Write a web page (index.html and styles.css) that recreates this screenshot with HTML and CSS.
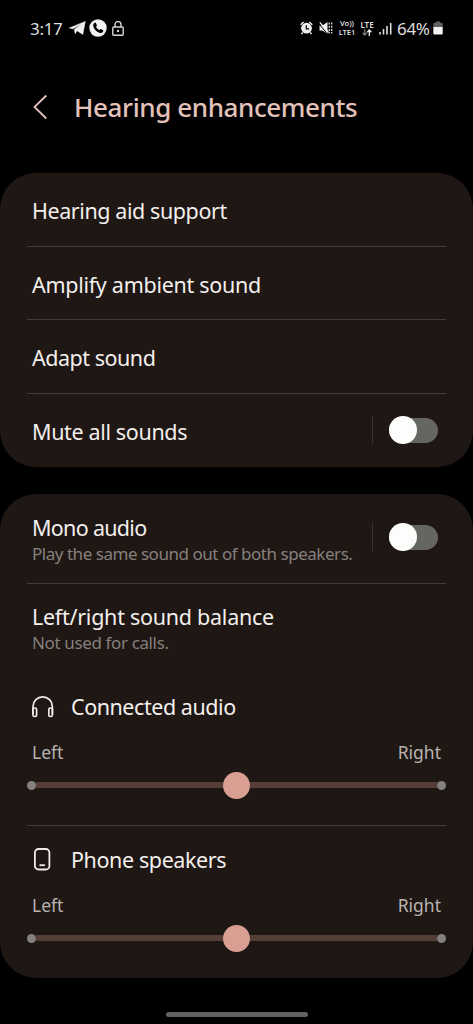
FILE: index.html
```html
<!DOCTYPE html>
<html lang="en">
<head>
<meta charset="utf-8">
<title>Hearing enhancements</title>
<link rel="stylesheet" href="styles.css">
</head>
<body>
<div class="screen">
  <div class="status">
    <span class="clock">3:17</span>
    <svg class="ic-plane" width="17" height="14" viewBox="0 0 17 14"><path d="M16.3.4 13.8 13.4 8 9.7 6.2 12.8 5.300 8.500 13 2.700 4 7.800.3 7z" fill="#f2f2f2" stroke="#f2f2f2" stroke-width=".5"/></svg>
    <svg class="ic-phone" width="18" height="18" viewBox="0 0 18 18"><circle cx="9" cy="9" r="8.700" fill="#f2f2f2"/><path d="M5.200 3.900 6.800 3.700 8 6.400 7 7.700Q8 10 10.400 11.100L11.600 10 14.300 11.300 13.900 13Q12.500 14.500 10.300 13.700 5.800 12 4.300 7.500 3.700 5.200 5.200 3.900z" fill="#000"/></svg>
    <svg class="ic-lock" width="12" height="15" viewBox="0 0 12 15" fill="none" stroke="#d8d8d8" stroke-width="1.400"><rect x=".8" y="6" width="10.400" height="8.200" rx="1"/><path d="M3 6V3.600a3 3 0 0 1 6 0V6"/><circle cx="6" cy="10" r="1.200" fill="#d8d8d8" stroke="none"/></svg>
    <span class="spacer"></span>
    <svg class="ic-alarm" width="13" height="14" viewBox="0 0 13 14"><circle cx="6.500" cy="7.200" r="5.400" fill="#eee"/><path d="M.7 3.700 3.700 1M12.300 3.700 9.300 1M2.700 11.500 1.500 13M10.300 11.500 11.500 13" stroke="#eee" stroke-width="1.500"/><path d="M6.300 4.300v3.500h2.800" fill="none" stroke="#000" stroke-width="1.200"/></svg>
    <svg class="ic-mute" width="14" height="14" viewBox="0 0 14 14"><path d="M.5 4.500H3.500L8.500 1V13L3.500 9.500H.5z" fill="#eee"/><path d="M0 3 8.500 13" stroke="#000" stroke-width="1"/><path d="M.8 1.300 9.500 11.500" stroke="#eee" stroke-width="1.300"/><path d="M10.300 1.500v11M12.700 1.500v11" stroke="#ccc" stroke-width="1.400" stroke-dasharray="2 1.200"/></svg>
    <span class="net volte"><span>Vo))</span><span>LTE1</span></span>
    <span class="net lte"><span>LTE</span><svg width="10" height="7" viewBox="0 0 10 7" fill="none" stroke-width="1.300"><path d="M2.700 0v6M.6 3.700l2.100 2.300 2.100-2.300" stroke="#777"/><path d="M7.300 7V1M5.200 3.300 7.300 1l2.100 2.300" stroke="#eee"/></svg></span>
    <svg class="ic-signal" width="13" height="13" viewBox="0 0 13 13"><path d="M1 10v2.500" stroke="#ddd" stroke-width="1.600"/><path d="M4.500 7v5.500M8 4v8.500M11.700 1v11.500" stroke="#ddd" stroke-width="1.600"/></svg>
    <span class="percent">64%</span>
    <svg class="ic-battery" width="10" height="14" viewBox="0 0 10 14"><path d="M3 .5h4v1.300h2Q9.700 1.800 9.700 2.800V6H.3V2.800Q.3 1.800 1 1.800h2z" fill="#606060"/><path d="M.3 6h9.400v6.300q0 1.200-1.200 1.200h-7Q.3 13.500.3 12.300z" fill="#f2f2f2"/></svg>
  </div>

  <div class="header">
    <svg class="back" width="16" height="26" viewBox="0 0 16 26"><path d="M13.300 1.500 1.500 13 13.300 24.500" fill="none" stroke="#e3c2ba" stroke-width="1.800"/></svg>
    <h1 class="title">Hearing enhancements</h1>
  </div>

  <div class="card">
    <div class="row"><span class="label l-hearing">Hearing aid support</span></div>
    <div class="row"><span class="label l-amplify">Amplify ambient sound</span></div>
    <div class="row"><span class="label l-adapt">Adapt sound</span></div>
    <div class="row"><span class="label l-mute">Mute all sounds</span><span class="switch-wrap"><span class="switch"><span class="knob"></span></span></span></div>
  </div>

  <div class="card second">
    <div class="row mono">
      <div class="texts"><span class="label l-mono">Mono audio</span><span class="sub l-play">Play the same sound out of both speakers.</span></div>
      <span class="switch-wrap"><span class="switch"><span class="knob"></span></span></span>
    </div>
    <div class="row balance">
      <div class="texts"><span class="label l-balance">Left/right sound balance</span><span class="sub l-not">Not used for calls.</span></div>
    </div>
    <div class="device">
      <div class="device-name">
        <svg width="22" height="24" viewBox="0 0 22 24" fill="none" stroke="#f0ebe8" stroke-width="1.700"><path d="M1 19V11.500a9.700 9.700 0 0 1 19.400 0V19"/><rect x="1" y="13" width="3.600" height="8.500" rx="1.500"/><rect x="16.800" y="13" width="3.600" height="8.500" rx="1.500"/></svg>
        <span class="label l-connected">Connected audio</span>
      </div>
      <div class="ends"><span>Left</span><span>Right</span></div>
      <div class="slider"><span class="dot"></span><span class="track"></span><span class="thumb"></span><span class="track"></span><span class="dot"></span></div>
    </div>
    <div class="device speakers">
      <div class="device-name">
        <svg width="22" height="24" viewBox="0 0 22 24" fill="none" stroke="#f0ebe8" stroke-width="1.800"><rect x="2.900" y="1" width="14.500" height="20.500" rx="3.500"/><path d="M7.500 17.200h5.400"/></svg>
        <span class="label l-phone">Phone speakers</span>
      </div>
      <div class="ends"><span>Left</span><span>Right</span></div>
      <div class="slider"><span class="dot"></span><span class="track"></span><span class="thumb"></span><span class="track"></span><span class="dot"></span></div>
    </div>
  </div>
  <div class="handle"></div>
</div>
</body>
</html>
```
FILE: styles.css
```css
* { box-sizing: border-box; }
body { margin: 0; background: #000; font-family: "Noto Sans", sans-serif; color: #f3efec; }
.screen { width: 473px; height: 1024px; overflow: hidden; display: flex; flex-direction: column; }
svg { display: block; flex: none; }
.status { height: 56px; flex: none; display: flex; align-items: center; padding: 0 30px; color: #dedede; font-size: 17px; }
.clock { width: 39px; letter-spacing: -0.3px; }
.ic-phone { margin-left: 3px; }
.ic-lock { margin-left: 5px; }
.spacer { flex: 1; }
.ic-alarm { margin-right: 6px; }
.ic-mute { margin-right: 5px; }
.net { display: flex; flex-direction: column; align-items: center; font-size: 8px; line-height: 8px; font-weight: 600; white-space: nowrap; }
.volte { width: 18px; margin-right: 3px; font-size: 7.500px; line-height: 9px; }
.lte { width: 16px; margin-right: 4px; }
.ic-signal { margin-right: 5px; }
.percent { width: 35px; letter-spacing: -0.3px; white-space: nowrap; }
.ic-battery { margin-left: 1px; }
.header { height: 117px; flex: none; display: flex; align-items: center; padding: 0 0 16px 33px; }
.title { margin: 0 0 0 25px; font-size: 26px; line-height: 36px; font-weight: 500; letter-spacing: -0.4px; color: #e3c2ba; white-space: nowrap; }
.card { flex: none; height: 294px; background: #1f1714; border-radius: 36px; padding: 0 27px; }
.second { height: 484px; margin-top: 26.500px; }
.row { height: 73.700px; display: flex; align-items: center; justify-content: space-between; padding: 3px 5px 0; border-bottom: 1px solid #443b38; }
.row:last-child { border-bottom: 0; }
.label { font-size: 21.500px; line-height: 28px; white-space: nowrap; }
.l-hearing { letter-spacing: -0.42px; }
.l-amplify { letter-spacing: -0.28px; }
.l-adapt { letter-spacing: -0.48px; }
.l-mute { letter-spacing: -0.35px; }
.l-mono { letter-spacing: -0.7px; }
.l-balance { letter-spacing: -0.26px; }
.l-connected { letter-spacing: -0.45px; }
.l-phone { letter-spacing: -0.4px; }
.switch-wrap { height: 28px; border-left: 1px solid #3b3330; padding-left: 16px; display: flex; align-items: center; margin: -4px 3.500px 0 0; }
.switch { width: 49px; height: 25px; border-radius: 13px; background: #666661; display: flex; align-items: center; }
.knob { width: 28px; height: 28px; border-radius: 50%; background: #fdfdfc; flex: none; }
.texts { display: flex; flex-direction: column; }
.sub { font-size: 17px; line-height: 23px; color: #85807d; white-space: nowrap; }
.l-play { letter-spacing: -0.47px; }
.l-not { letter-spacing: -0.37px; }
.mono { height: 90px; padding-top: 2px; }
.balance { height: 88px; border: 0; padding-top: 2px; }
.device { height: 154px; border-bottom: 1px solid #443b38; padding: 21px 5px 0; }
.speakers { border: 0; padding-top: 20px; }
.device-name { display: flex; align-items: center; height: 28px; gap: 17px; }
.ends { display: flex; justify-content: space-between; margin-top: 19.500px; font-size: 17.500px; line-height: 24px; color: #b9b3b0; }
.slider { display: flex; align-items: center; height: 28px; margin: 7px -5px 0; }
.dot { width: 9px; height: 9px; border-radius: 50%; background: #858180; }
.track { flex: 1; height: 6px; background: #553e38; }
.thumb { width: 27px; height: 27px; border-radius: 50%; background: #d99f92; }
.handle { width: 142px; height: 5px; border-radius: 3px; background: #626262; margin: 34px 0 0 166px; }
```
